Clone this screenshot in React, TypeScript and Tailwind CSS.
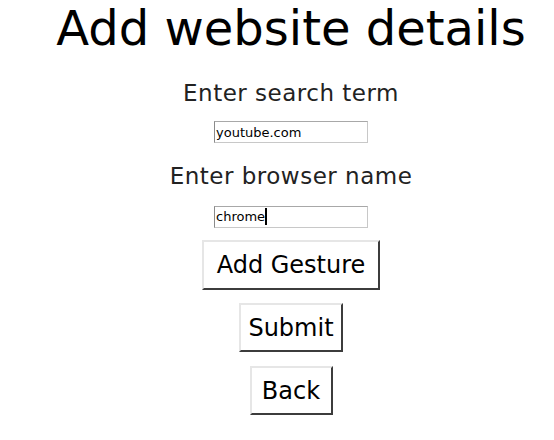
import React, { useState } from 'react';

const gothic = { fontFamily: '"DejaVu Sans", "Noto Sans", sans-serif' };

export default function App() {
    const [term, setTerm] = useState('youtube.com');
    const [browser, setBrowser] = useState('chrome');

    const btn =
        'bg-white text-black border-2 border-t-[#e6e6e6] border-l-[#e6e6e6] border-r-[#3c3c3c] border-b-[#3c3c3c] text-[24px] leading-none';
    const field =
        'w-[154px] h-[22px] border border-[#c8c8c8] border-l-[#8a8a8a] border-t-[#a8a8a8] px-[1px] text-[13px] text-black outline-none';

    return (
        <div className="w-[554px] h-[440px] bg-white overflow-hidden pl-[28px]" style={gothic}>
            <div className="flex flex-col items-center">
                <h1 className="text-[48px] leading-none font-normal text-black mt-[4px]">Add website details</h1>

                <label className="text-[23px] leading-none text-[#222] mt-[30px] tracking-[0.5px]">Enter search term</label>
                <input
                    value={term}
                    onChange={e => setTerm(e.target.value)}
                    className={`${field} mt-[16px]`}
                />

                <label className="text-[23px] leading-none text-[#222] mt-[22px] tracking-[0.5px]">Enter browser name</label>
                <div className="relative mt-[16px]">
                    <input
                        value={browser}
                        onChange={e => setBrowser(e.target.value)}
                        className={field}
                    />
                    {/* fake caret after the text */}
                    <div className="absolute inset-0 flex items-center pl-[2px] pointer-events-none text-[13px]">
                        <span className="invisible">{browser}</span>
                        <span className="w-[2px] h-[17px] bg-black" />
                    </div>
                </div>

                <button className={`${btn} mt-[12px] w-[178px] h-[50px]`}>Add Gesture</button>
                <button className={`${btn} mt-[13px] w-[104px] h-[49px]`}>Submit</button>
                <button className={`${btn} mt-[14px] w-[83px] h-[49px]`}>Back</button>
            </div>
        </div>
    );
}
